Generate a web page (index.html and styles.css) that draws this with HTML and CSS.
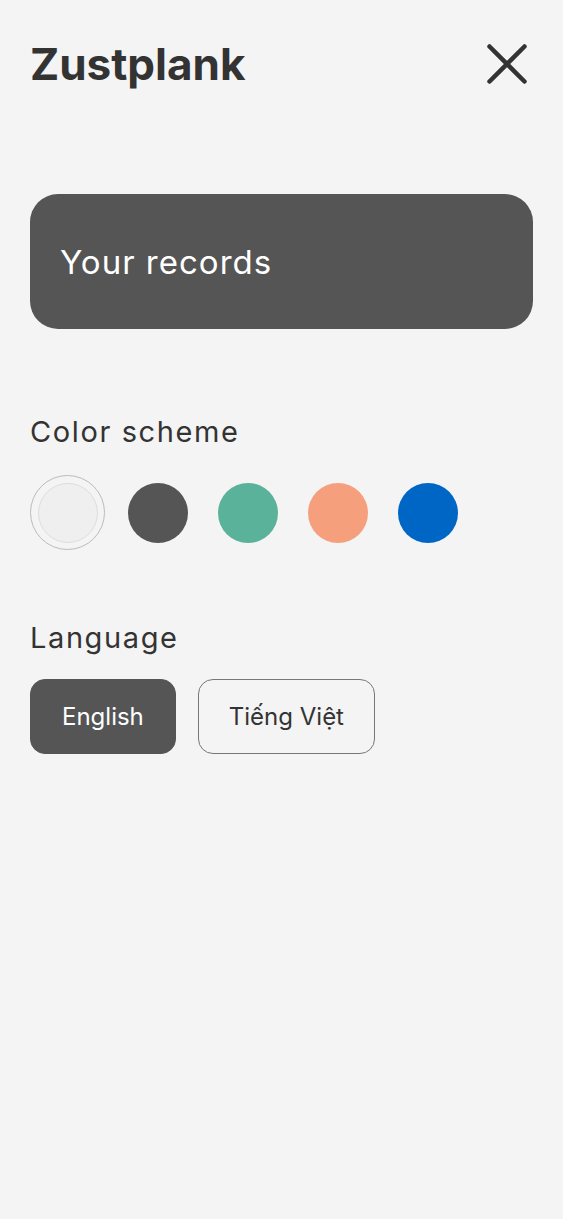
FILE: index.html
```html
<!DOCTYPE html>
<html lang="en">
<head>
<meta charset="utf-8">
<title>Zustplank</title>
<link rel="stylesheet" href="styles.css">
</head>
<body>
<div class="page">
  <header class="header">
    <h1 class="brand">Zustplank</h1>
    <button class="close" aria-label="Close">
      <svg width="40" height="40" viewBox="0 0 40 40" fill="none" stroke="#333" stroke-width="4.5" stroke-linecap="round">
        <path d="M2.5 2.5 L37.5 37.5 M37.5 2.5 L2.5 37.5"/>
      </svg>
    </button>
  </header>

  <a class="records" href="#">Your records</a>

  <section class="section scheme">
    <h2 class="label">Color scheme</h2>
    <div class="swatches">
      <span class="swatch selected"><span class="dot dot-light"></span></span>
      <span class="swatch"><span class="dot dot-dark"></span></span>
      <span class="swatch"><span class="dot dot-green"></span></span>
      <span class="swatch"><span class="dot dot-orange"></span></span>
      <span class="swatch"><span class="dot dot-blue"></span></span>
    </div>
  </section>

  <section class="section lang">
    <h2 class="label">Language</h2>
    <div class="langs">
      <button class="lang-btn active">English</button>
      <button class="lang-btn">Tiếng Việt</button>
    </div>
  </section>
</div>
</body>
</html>
```

FILE: styles.css
```css
* { box-sizing: border-box; }
html, body { margin: 0; padding: 0; }
body {
  background: #f4f4f4;
  color: #333;
  font-family: "Inter", "Noto Sans", sans-serif;
  min-height: 1219px;
}
.page {
  padding: 0 30px;
}
.header {
  height: 128px;
  display: flex;
  align-items: center;
  justify-content: space-between;
}
.brand {
  margin: 0;
  font-size: 44px;
  font-weight: 700;
  line-height: 1;
  letter-spacing: 0;
  color: #333;
}
.close {
  border: 0;
  background: none;
  padding: 0;
  margin-right: 6px;
  width: 40px;
  height: 40px;
  display: flex;
}
.records {
  margin-top: 66px;
  height: 135px;
  border-radius: 28px;
  background: #555;
  color: #fff;
  text-decoration: none;
  display: flex;
  align-items: center;
  padding-left: 30px;
  font-size: 33px;
  letter-spacing: 1px;
  font-weight: 400;
}
.section { display: flex; flex-direction: column; }
.scheme { margin-top: 86px; }
.lang { margin-top: 71px; }
.label {
  margin: 0;
  font-size: 29px;
  letter-spacing: 1.6px;
  font-weight: 400;
  line-height: 34px;
  color: #333;
}
.swatches {
  display: flex;
  gap: 15px;
  margin-top: 26px;
}
.swatch {
  width: 75px;
  height: 75px;
  border-radius: 50%;
  display: flex;
  align-items: center;
  justify-content: center;
}
.swatch.selected { border: 1.5px solid #bbb; }
.dot {
  width: 60px;
  height: 60px;
  border-radius: 50%;
}
.dot-light { background: #efefef; border: 1.5px solid #ddd; }
.dot-dark { background: #555; }
.dot-green { background: #5ab29a; }
.dot-orange { background: #f59f7d; }
.dot-blue { background: #0066c6; }
.langs {
  display: flex;
  gap: 22px;
  margin-top: 24px;
}
.lang-btn {
  height: 75px;
  padding: 0 30px;
  border-radius: 15px;
  border: 1.5px solid #777;
  background: transparent;
  color: #333;
  font-family: inherit;
  font-size: 24px;
}
.lang-btn.active {
  background: #555;
  border-color: #555;
  color: #fff;
  padding: 0 31px;
}
```
